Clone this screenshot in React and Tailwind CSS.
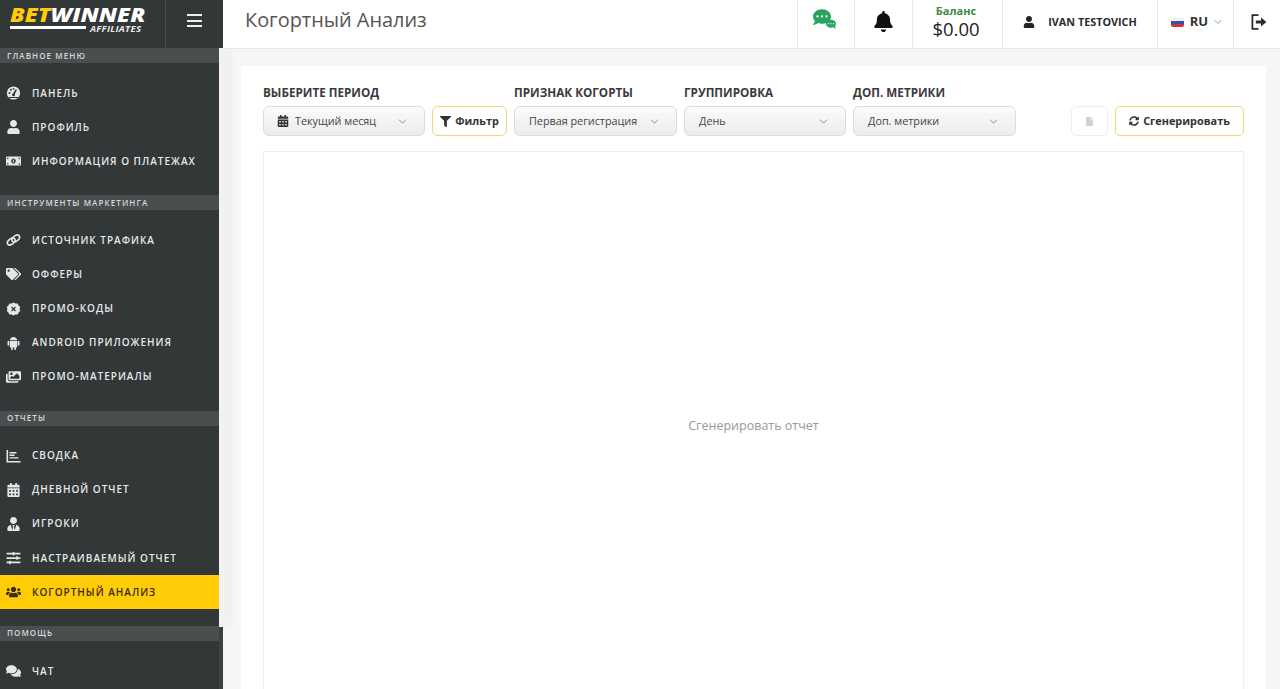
import React from 'react';
import { ChevronDown } from 'lucide-react';
import {
  FaUser,
  FaMoneyBillAlt,
  FaTags,
  FaImages,
  FaCalendarAlt,
  FaUserTie,
  FaSlidersH,
  FaUsers,
  FaComments,
  FaBell,
  FaFilter,
  FaSyncAlt,
  FaFile,
  FaCommentDots,
} from 'react-icons/fa';

const font = "font-['Open_Sans','Noto_Sans',sans-serif]";

const ChartIcon = ({ className }) => (
  <svg viewBox="0 0 14 14" className={className} fill="currentColor">
    <path d="M0 1h1.6v11H14v1.5H0z" />
    <path d="M3 3h7v1.4H3zM3 5.6h5v1.4H3zM3 8.2h9v1.4H3z" />
  </svg>
);

const GaugeIcon = ({ className }) => (
  <svg viewBox="0 0 14 14" className={className}>
    <circle cx="7" cy="7" r="6.6" fill="currentColor" />
    <path d="M7 8.5 9.8 3.6" stroke="#323737" strokeWidth="1.6" />
    <circle cx="7" cy="8.8" r="1.5" fill="#323737" />
    <circle cx="3" cy="7" r="1" fill="#323737" />
    <circle cx="4.4" cy="3.8" r="1" fill="#323737" />
    <circle cx="7" cy="2.8" r="0.9" fill="#323737" />
    <path d="M2.5 11.5h9" stroke="#323737" strokeWidth="1" />
  </svg>
);

const LinkIcon = ({ className }) => (
  <svg viewBox="0 0 16 14" className={className} fill="none" stroke="currentColor" strokeWidth="1.7">
    <ellipse cx="5.6" cy="8.6" rx="4.6" ry="2.9" transform="rotate(-38 5.6 8.6)" />
    <ellipse cx="10.4" cy="5.4" rx="4.6" ry="2.9" transform="rotate(-38 10.4 5.4)" />
  </svg>
);

const PromoIcon = ({ className }) => (
  <svg viewBox="0 0 14 14" className={className}>
    <path
      fill="currentColor"
      d="M7 .4l1.9 1.1 2.2-.1 1 2 1.6 1.5-.6 2.1.6 2.1-1.6 1.5-1 2-2.2-.1L7 13.6l-1.9-1.1-2.2.1-1-2L.3 9.1l.6-2.1-.6-2.1 1.6-1.5 1-2 2.2.1z"
    />
    <path d="M5 5l4 4M9 5L5 9" stroke="#323737" strokeWidth="1.2" />
  </svg>
);

const AndroidIcon = ({ className }) => (
  <svg viewBox="0 0 14 15" className={className} fill="currentColor">
    <path d="M3 4.6C3.2 2.6 4.8 1.2 7 1.2s3.8 1.4 4 3.4z" />
    <path d="M3 5.3h8v6.2c0 .5-.4.9-.9.9H3.9c-.5 0-.9-.4-.9-.9z" />
    <rect x="0.6" y="5.2" width="1.8" height="5" rx="0.9" />
    <rect x="11.6" y="5.2" width="1.8" height="5" rx="0.9" />
    <rect x="4.4" y="11.5" width="1.8" height="3.5" rx="0.9" />
    <rect x="7.8" y="11.5" width="1.8" height="3.5" rx="0.9" />
  </svg>
);

const ExitIcon = ({ className }) => (
  <svg viewBox="0 0 16 16" className={className} fill="none" stroke="currentColor">
    <path d="M7.5 1.2H1.4v13.6h6.1" strokeWidth="1.8" />
    <path d="M4.8 8h6" strokeWidth="3" />
    <path d="M10 3.6 15.4 8 10 12.4z" fill="currentColor" stroke="none" />
  </svg>
);

const MENU = [
  {
    title: 'Главное меню',
    items: [
      { icon: GaugeIcon, label: 'Панель' },
      { icon: FaUser, label: 'Профиль' },
      { icon: FaMoneyBillAlt, label: 'Информация о платежах' },
    ],
  },
  {
    title: 'Инструменты маркетинга',
    items: [
      { icon: LinkIcon, label: 'Источник трафика' },
      { icon: FaTags, label: 'Офферы' },
      { icon: PromoIcon, label: 'Промо-коды' },
      { icon: AndroidIcon, label: 'Android приложения' },
      { icon: FaImages, label: 'Промо-материалы' },
    ],
  },
  {
    title: 'Отчеты',
    items: [
      { icon: ChartIcon, label: 'Сводка' },
      { icon: FaCalendarAlt, label: 'Дневной отчет' },
      { icon: FaUserTie, label: 'Игроки' },
      { icon: FaSlidersH, label: 'Настраиваемый отчет' },
      { icon: FaUsers, label: 'Когортный анализ', active: true },
    ],
  },
  {
    title: 'Помощь',
    items: [{ icon: FaComments, label: 'Чат' }],
  },
];

const MenuItem = ({ icon: Icon, label, active }) => (
  <div
    className={`flex h-[34.2px] items-center pl-[6px] text-[10px] font-semibold uppercase tracking-[1px] ${
      active ? 'bg-[#ffcc07] text-[#3a2a10]' : 'text-[#e6e8e8]'
    }`}
  >
    <span className="flex w-[15px] justify-center">
      <Icon className="h-[14px] w-[15px]" />
    </span>
    <span className="ml-[11px] whitespace-nowrap">{label}</span>
  </div>
);

const Section = ({ title, items }) => (
  <div className="mb-[16.5px]">
    <div className="flex h-[15px] items-center bg-[#4a4e4e] pl-[7px] text-[8px] font-semibold uppercase tracking-[1.1px] text-[#d5d8d8]">
      {title}
    </div>
    <div className="pt-[13px]">
      {items.map((item) => (
        <MenuItem key={item.label} {...item} />
      ))}
    </div>
  </div>
);

const Logo = () => (
  <div className="relative h-[48px] w-[165px] shrink-0 overflow-hidden italic">
    <div className="absolute left-[10px] top-[7px] origin-left scale-x-[1.16] whitespace-nowrap text-[20px] font-extrabold leading-[16px]">
      <span className="text-[#ffcc07]">BET</span>
      <span className="text-white">WINNER</span>
    </div>
    <div className="absolute left-[10px] top-[26px] h-[3px] w-[76px] bg-white" />
    <div className="absolute left-[90px] top-[24px] text-[9.5px] font-bold leading-[9px] tracking-[0.3px] text-[#e8e8e8]">AFFILIATES</div>
  </div>
);

const Sidebar = () => (
  <aside className="relative z-10 flex h-full w-[223px] shrink-0 flex-col bg-[#323737]">
    <div className="flex h-[48px] shrink-0">
      <Logo />
      <div className="flex w-[58px] items-center justify-center border-l border-[#4a4e4e]">
        <div className="mb-[7px] flex w-[15px] flex-col gap-[3.5px]">
          <span className="h-[2px] bg-[#eeeeee]" />
          <span className="h-[2px] bg-[#eeeeee]" />
          <span className="h-[2px] bg-[#eeeeee]" />
        </div>
      </div>
    </div>
    <div className="flex min-h-0 flex-1">
      <div className="w-[219px] shrink-0">
        {MENU.map((s) => (
          <Section key={s.title} {...s} />
        ))}
      </div>
      <div className="flex w-[4px] flex-col">
        <div className="h-[579px] bg-[#f2f2f2] shadow-[6px_0_8px_rgba(0,0,0,0.07)]" />
        <div className="flex-1 bg-[#3c4141]" />
      </div>
    </div>
  </aside>
);

const HeaderCell = ({ width, children }) => (
  <div className={`flex h-full items-center justify-center border-l border-[#e8e8e8] ${width}`}>{children}</div>
);

const Header = () => (
  <header className="relative z-20 flex h-[49px] shrink-0 items-center border-b border-[#e6e6e6] bg-white">
    <h1 className="flex-1 -translate-y-[4px] pl-[22px] text-[19.9px] leading-[28px] text-[#555555]">Когортный Анализ</h1>
    <HeaderCell width="w-[57px]">
      <div className="relative -ml-[4px] -mt-[12px] h-[21px] w-[23px] text-[#27a35b]">
        <FaCommentDots className="absolute left-0 top-0 h-[18px] w-[18px]" />
        <FaCommentDots className="absolute bottom-0 right-0 h-[10px] w-[10px] -scale-x-100" />
      </div>
    </HeaderCell>
    <HeaderCell width="w-[58px]">
      <FaBell className="-mt-[6px] h-[21px] w-[21px] text-[#111111]" />
    </HeaderCell>
    <HeaderCell width="w-[90px]">
      <div className="-ml-[3px] -mt-[4px] text-center">
        <div className="text-[11px] font-bold leading-[14px] text-[#3d8a3d]">Баланс</div>
        <div className="text-[18.5px] leading-[22px] text-[#222222]">$0.00</div>
      </div>
    </HeaderCell>
    <HeaderCell width="w-[155px]">
      <div className="-mt-[4px] flex items-center">
        <FaUser className="h-[12px] w-[12px] text-[#222222]" />
        <span className="ml-[13px] text-[10.8px] font-bold text-[#2b2b2b]">IVAN TESTOVICH</span>
      </div>
    </HeaderCell>
    <HeaderCell width="w-[76px]">
      <div className="-mt-[4px] ml-[4px] flex items-center">
        <span className="flex h-[9px] w-[13px] flex-col overflow-hidden rounded-[2px]">
          <span className="flex-1 bg-[#eceff4]" />
          <span className="flex-1 bg-[#3a4fa8]" />
          <span className="flex-1 bg-[#d22f3f]" />
        </span>
        <span className="ml-[6px] text-[13px] font-bold text-[#333333]">RU</span>
        <ChevronDown className="ml-[4px] h-[12px] w-[12px] text-[#777777]" strokeWidth={1.5} />
      </div>
    </HeaderCell>
    <HeaderCell width="w-[47px]">
      <ExitIcon className="-mt-[4px] ml-[3px] h-[16px] w-[16px] text-[#2b2b2b]" />
    </HeaderCell>
  </header>
);

const Select = ({ label, width, text, icon: Icon }) => (
  <div className={width}>
    <div className="mb-[5px] text-[11.7px] font-bold uppercase leading-[17px] text-[#3a3a3a]">{label}</div>
    <div className="flex h-[30px] items-center rounded-[6px] border border-[#dcdcdc] bg-gradient-to-b from-[#fbfbfb] to-[#ececec] pl-[14px] pr-[15px] text-[10.8px] text-[#444444]">
      {Icon && <Icon className="-ml-[1px] mr-[6px] h-[12px] w-[12px] text-[#333333]" />}
      <span className="flex-1 -translate-y-[0.5px]">{text}</span>
      <ChevronDown className="h-[13px] w-[13px] text-[#777777]" strokeWidth={1.5} />
    </div>
  </div>
);

const Toolbar = () => (
  <div className="flex items-end">
    <Select label="Выберите период" width="w-[162px]" text="Текущий месяц" icon={FaCalendarAlt} />
    <button className="ml-[7px] flex h-[30px] w-[75px] items-center justify-center rounded-[6px] border border-[#f2d675] bg-white text-[10.8px] font-bold text-[#333333]">
      <FaFilter className="mr-[4px] h-[11px] w-[11px]" />
      Фильтр
    </button>
    <div className="ml-[7px]">
      <Select label="Признак когорты" width="w-[163px]" text="Первая регистрация" />
    </div>
    <div className="ml-[7px]">
      <Select label="Группировка" width="w-[162px]" text="День" />
    </div>
    <div className="ml-[7px]">
      <Select label="Доп. метрики" width="w-[163px]" text="Доп. метрики" />
    </div>
    <div className="flex-1" />
    <button className="flex h-[30px] w-[37px] items-center justify-center rounded-[5px] border border-[#eeeeee] bg-white">
      <FaFile className="h-[9px] w-[9px] text-[#d0d0d0]" />
    </button>
    <button className="ml-[7px] flex h-[30px] w-[129px] items-center justify-center rounded-[5px] border border-[#f2d675] bg-white text-[10.9px] font-bold text-[#333333]">
      <FaSyncAlt className="mr-[4px] h-[10px] w-[10px]" />
      Сгенерировать
    </button>
  </div>
);

export default function App() {
  return (
    <div className={`flex h-[689px] w-[1280px] overflow-hidden bg-[#f6f6f6] ${font}`}>
      <Sidebar />
      <main className="flex min-w-0 flex-1 flex-col">
        <Header />
        <div className="min-h-0 flex-1 pl-[18px] pr-[14px] pt-[17px]">
          <div className="flex h-[640px] flex-col bg-white px-[22px] pt-[18px]">
            <Toolbar />
            <div className="mt-[15px] flex h-[550px] items-center justify-center border border-[#eeeeee] text-[12.5px] text-[#999999]">
              Сгенерировать отчет
            </div>
          </div>
        </div>
      </main>
    </div>
  );
}
